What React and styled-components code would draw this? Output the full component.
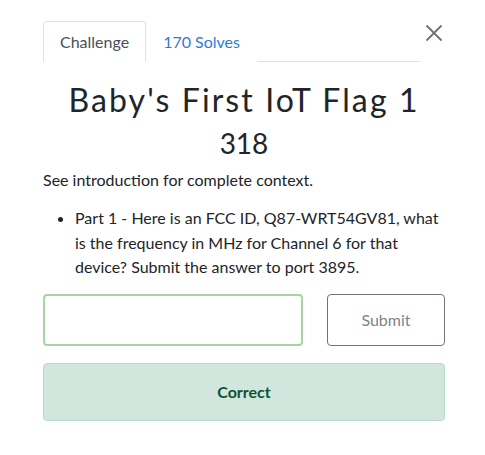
import React from "react";
import styled, { createGlobalStyle } from "styled-components";

const Global = createGlobalStyle`
  html, body { margin: 0; padding: 0; background: #fff; }
  body { font-family: Lato, "Open Sans", sans-serif; color: #212529; }
  * { box-sizing: border-box; }
`;

const Modal = styled.div`
  width: 485px;
  padding: 21px 40px 0 43px;
`;

const Header = styled.div`
  display: flex;
  align-items: flex-start;
`;

const Tabs = styled.div`
  display: flex;
  width: 377px;
  border-bottom: 1px solid #dee2e6;
`;

const Tab = styled.div`
  height: 41px;
  margin-bottom: -1px;
  padding: 0 16px 1px;
  display: flex;
  align-items: center;
  font-size: 16px;
  color: ${(p) => (p.$active ? "#495057" : "#2f7ad8")};
  background: #fff;
  border: 1px solid ${(p) => (p.$active ? "#dee2e6" : "transparent")};
  border-bottom-color: ${(p) => (p.$active ? "#fff" : "transparent")};
  border-radius: 4px 4px 0 0;
`;

const Close = styled.button`
  margin-left: 3px;
  margin-top: 1px;
  width: 22px;
  height: 22px;
  padding: 0;
  border: none;
  background: none;
  display: flex;
  align-items: center;
  justify-content: center;
`;

const Title = styled.h2`
  margin: 18px 0 0;
  text-align: center;
  font-weight: 400;
  font-size: 32px;
  letter-spacing: 2.1px;
  line-height: 40px;
  color: #212529;
`;

const Points = styled.h3`
  margin: 3px 0 0;
  text-align: center;
  font-weight: 400;
  font-size: 28px;
  line-height: 40px;
  color: #212529;
`;

const Desc = styled.p`
  margin: 5px 0 0;
  font-size: 16px;
  line-height: 24px;
`;

const List = styled.ul`
  margin: 14px 0 0;
  padding-left: 32px;
  font-size: 16px;
  line-height: 24.5px;
`;

const FormRow = styled.div`
  display: flex;
  gap: 24px;
  margin-top: 14px;
`;

const Input = styled.input`
  width: 260px;
  height: 52px;
  border: 2px solid #a6d6a0;
  border-radius: 4px;
  padding: 0 12px;
  font-size: 16px;
  font-family: inherit;
  outline: none;
`;

const SubmitBtn = styled.button`
  flex: 1;
  height: 52px;
  border: 1px solid #6c757d;
  border-radius: 4px;
  background: #fff;
  color: #7c848b;
  font-family: inherit;
  font-size: 16px;
`;

const Alert = styled.div`
  margin-top: 17px;
  height: 58px;
  display: flex;
  align-items: center;
  justify-content: center;
  background: #d1e7dd;
  border: 1px solid #badbcc;
  border-radius: 4px;
  color: #0f5132;
  font-weight: 700;
  font-size: 16px;
`;

export default function App() {
  return (
    <>
      <Global />
      <Modal>
        <Header>
          <Tabs>
            <Tab $active>Challenge</Tab>
            <Tab>170 Solves</Tab>
          </Tabs>
          <Close aria-label="Close">
            <svg width="18" height="18" viewBox="0 0 18 18">
              <path d="M1.5 1.5 L16.5 16.5 M16.5 1.5 L1.5 16.5" stroke="#707070" strokeWidth="1.8" fill="none" />
            </svg>
          </Close>
        </Header>
        <Title>Baby's First IoT Flag 1</Title>
        <Points>318</Points>
        <Desc>See introduction for complete context.</Desc>
        <List>
          <li>
            Part 1 - Here is an FCC ID, Q87-WRT54GV81, what is the frequency in MHz for Channel 6 for that
            device? Submit the answer to port 3895.
          </li>
        </List>
        <FormRow>
          <Input />
          <SubmitBtn>Submit</SubmitBtn>
        </FormRow>
        <Alert>Correct</Alert>
      </Modal>
    </>
  );
}
